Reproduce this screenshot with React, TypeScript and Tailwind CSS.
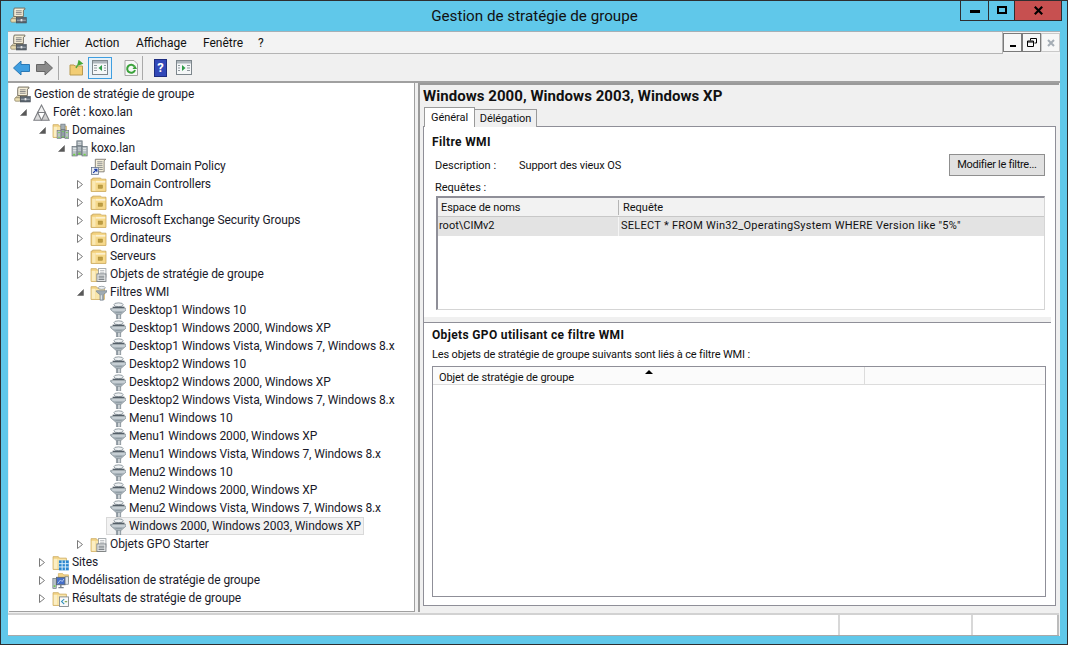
import React from "react";

const S = ({ children, size = 16, vb = 16 }: { children: React.ReactNode; size?: number; vb?: number }) => (
  <svg width={size} height={size} viewBox={`0 0 ${vb} ${vb}`} className="shrink-0 block">{children}</svg>
);

const Scroll = ({ size = 17 }: { size?: number }) => (
  <S size={size}>
    <path d="M4 1h10v1.2L12.6 3V9H3.5V3z" fill="#f6efd8" stroke="#6f6a5c" strokeWidth="0.9" />
    <path d="M5.5 3.6h5.5M5.5 5.2h5.5M5.5 6.8h5.5" stroke="#77777a" strokeWidth="0.8" />
    <path d="M1 11.5 3 9.3h9v1.4L6 11z" fill="#efe3bd" stroke="#8a8266" strokeWidth="0.6" />
    <rect x="0.7" y="11" width="5.3" height="3.3" rx="1" fill="#eadcb0" stroke="#8a8266" strokeWidth="0.7" />
    <rect x="6" y="10" width="9.3" height="5" fill="#5c6670" stroke="#3f4750" strokeWidth="0.6" />
    <rect x="6.5" y="12" width="8.4" height="0.9" fill="#aab2ba" />
    <rect x="10" y="11.3" width="1.6" height="2.2" fill="#e7e7e7" />
  </S>
);

const Forest = () => (
  <S size={17}>
    <path d="M8 1 11.6 8H4.4z" fill="#f2f2f2" stroke="#7c7e82" strokeWidth="1" />
    <path d="M4.4 8 8 15.3H0.8z" fill="#dcdcdc" stroke="#7c7e82" strokeWidth="1" />
    <path d="M11.6 8 15.2 15.3H8z" fill="#cfcfcf" stroke="#7c7e82" strokeWidth="1" />
  </S>
);

const Servers = () => (
  <S size={17}>
    <rect x="5.5" y="0.8" width="5" height="5" fill="#a4aeb4" stroke="#67727a" strokeWidth="0.7" />
    <rect x="1" y="6" width="4.8" height="9" fill="#b9c1c6" stroke="#67727a" strokeWidth="0.7" />
    <rect x="5.6" y="5.5" width="4.8" height="8.5" fill="#949fa6" stroke="#67727a" strokeWidth="0.7" />
    <rect x="10.4" y="6" width="4.8" height="9" fill="#b9c1c6" stroke="#67727a" strokeWidth="0.7" />
    <path d="M2 8h3M6.5 7.5h3M11.3 8h3M2 10h3M6.5 9.5h3M11.3 10h3M6.5 2.5h3M6.5 4h3" stroke="#eef1f3" strokeWidth="0.7" />
    <rect x="2" y="13" width="2" height="1.6" fill="#6fd04a" />
    <rect x="7" y="12" width="2" height="1.6" fill="#6fd04a" />
    <rect x="11.8" y="13" width="2" height="1.6" fill="#6fd04a" />
  </S>
);

const PaleFolder = ({ children }: { children?: React.ReactNode }) => (
  <S size={17}>
    <path d="M1 2.5h5l1 1.4h6.5V14.5H1z" fill="#f3d486" stroke="#cfae62" strokeWidth="0.8" />
    <path d="M1.6 4.5h3.4v9.5H1.6z" fill="#fbeec4" />
    <path d="M5 4.6h8v9.5H5z" fill="#f9e6aa" />
    {children}
  </S>
);

const DomainFolder = () => (
  <PaleFolder>
    <rect x="8.3" y="2" width="4" height="5" fill="#a4aeb4" stroke="#67727a" strokeWidth="0.6" />
    <rect x="4.8" y="8" width="3.8" height="7.4" fill="#b9c1c6" stroke="#67727a" strokeWidth="0.6" />
    <rect x="8.5" y="7" width="3.8" height="7.8" fill="#949fa6" stroke="#67727a" strokeWidth="0.6" />
    <rect x="12.2" y="8" width="3.6" height="7.4" fill="#b9c1c6" stroke="#67727a" strokeWidth="0.6" />
    <path d="M5.8 14.4h1.6M9.5 13.8h1.6M13.2 14.4h1.6M5.8 10h1.6M9.5 9h1.6M13.2 10h1.6" stroke="#6fd04a" strokeWidth="0.9" />
  </PaleFolder>
);

const OuFolder = () => (
  <S size={17}>
    <path d="M1 3h1.5V2h7.5l1 1H15v11.5H1z" fill="#f2cf7a" stroke="#c9a75a" strokeWidth="0.8" />
    <path d="M2 4.5h3.4v9.5H2z" fill="#fae9b4" />
    <path d="M5.4 3.5h9v10.5h-9z" fill="#f6d98c" />
    <path d="M5.4 5.5h9" stroke="#fdf4d8" strokeWidth="1.4" />
    <rect x="7.7" y="8.5" width="4" height="3" fill="#bf9d42" stroke="#a58935" strokeWidth="0.5" />
  </S>
);

const DocFolder = () => (
  <PaleFolder>
    <rect x="8" y="2.5" width="7" height="8" fill="#fff" stroke="#8a9095" strokeWidth="0.7" />
    <path d="M9.5 4.5h4M9.5 6.5h4" stroke="#8a9095" strokeWidth="0.7" />
    <rect x="6.5" y="7.5" width="8.5" height="7" fill="#eef0f1" stroke="#6f767c" strokeWidth="0.8" />
    <path d="M8 9.6h5.5M8 11.2h5.5M8 12.8h5.5" stroke="#6f767c" strokeWidth="0.9" />
  </PaleFolder>
);

const Funnel = () => (
  <S size={17}>
    <ellipse cx="9" cy="2.6" rx="4.4" ry="1.8" fill="#eef1f3" stroke="#76828a" strokeWidth="0.7" />
    <path d="M3.4 4.4h11.2v1.2H3.4z" fill="#4a555d" />
    <path d="M1.5 6h15v1.2L11 12H7L1.5 7.2z" fill="#aab5bc" stroke="#7c8890" strokeWidth="0.6" />
    <path d="M3 7.5h12" stroke="#e6ebee" strokeWidth="0.9" />
    <path d="M6 9.8h6" stroke="#8d99a1" strokeWidth="0.9" />
    <path d="M7 12h4v4H7z" fill="#8f9aa2" stroke="#7a868e" strokeWidth="0.5" />
    <path d="M9.4 12v3.8" stroke="#eef1f3" strokeWidth="1.2" />
  </S>
);

const FunnelFolder = () => (
  <PaleFolder>
    <ellipse cx="11" cy="3.6" rx="3.4" ry="1.4" fill="#eef1f3" stroke="#76828a" strokeWidth="0.6" />
    <path d="M6 6.3h10v1l-3.4 2.7v5.2h-3.2v-5.2L6 7.3z" fill="#9fabb3" stroke="#74808a" strokeWidth="0.6" />
    <path d="M10.6 10.5v4.2" stroke="#eef1f3" strokeWidth="1" />
  </PaleFolder>
);

const Policy = () => (
  <S size={17}>
    <path d="M5 1.2h9.8L13.3 2.6V13H5z" fill="#f5efda" stroke="#77736a" strokeWidth="0.8" />
    <path d="M6.8 3.6h5M6.8 5.4h5M6.8 7.2h5M8.6 9h3.4M8.6 10.8h3.4" stroke="#797d82" strokeWidth="0.8" />
    <rect x="1.3" y="9" width="6.7" height="6.5" fill="#e8ecf2" stroke="#5b6b86" strokeWidth="0.7" />
    <path d="M3 14 6.3 10.7M4 10.6h2.4V13" stroke="#1f3fa8" strokeWidth="1.2" fill="none" />
  </S>
);

const Sites = () => (
  <PaleFolder>
    <rect x="6.5" y="6" width="9.3" height="9.4" fill="#2a86cf" />
    <path d="M9.5 6v9.4M12.6 6v9.4M6.5 9.1h9.3M6.5 12.2h9.3" stroke="#dcf0fc" strokeWidth="0.9" />
  </PaleFolder>
);

const Modeling = () => (
  <S size={17}>
    <path d="M6 1.5h4l1 1.2h4.5V9H6z" fill="#f3d486" stroke="#c9a85c" strokeWidth="0.6" />
    <rect x="0.8" y="6" width="3.2" height="9.5" fill="#b9c1c6" stroke="#67727a" strokeWidth="0.6" />
    <rect x="1.6" y="12.5" width="1.6" height="1.6" fill="#6fd04a" />
    <rect x="4.3" y="5" width="8" height="7" fill="#456fc9" stroke="#5b6670" strokeWidth="0.8" />
    <path d="M5.4 10.8 8 7.5 9.5 9l1.7-2.4" stroke="#d7e6fb" strokeWidth="0.7" fill="none" />
    <path d="M8.3 12v2M6 14.7h5" stroke="#77818a" strokeWidth="1.3" />
    <rect x="12.3" y="4.5" width="3.2" height="7" fill="#e2e7eb" stroke="#67727a" strokeWidth="0.6" />
  </S>
);

const Results = () => (
  <PaleFolder>
    <rect x="7" y="6.5" width="8.5" height="9" fill="#fafafa" stroke="#7c8388" strokeWidth="0.8" />
    <path d="M11.5 8.5 9 10.8l2.5 2.4" stroke="#2f8fbd" strokeWidth="1" fill="none" />
    <path d="M12 11h2.3" stroke="#6f9c3f" strokeWidth="1" />
  </PaleFolder>
);

const Expanded = () => (
  <svg width="7" height="7" viewBox="0 0 7 7" className="block"><path d="M6.5 0.5V6.5H0.5z" fill="#595959" stroke="#595959" strokeWidth="0.5" /></svg>
);
const Collapsed = () => (
  <svg width="6" height="9" viewBox="0 0 6 9" className="block"><path d="M0.5 0.5 5.5 4.5 0.5 8.5z" fill="#fff" stroke="#7a7a7a" strokeWidth="1" /></svg>
);

type Row = { l: number; t: string; e?: "o" | "c"; i: React.ReactNode; sel?: boolean };
const F = <Funnel />;
const rows: Row[] = [
  { l: 0, t: "Gestion de stratégie de groupe", i: <Scroll /> },
  { l: 1, t: "Forêt : koxo.lan", e: "o", i: <Forest /> },
  { l: 2, t: "Domaines", e: "o", i: <DomainFolder /> },
  { l: 3, t: "koxo.lan", e: "o", i: <Servers /> },
  { l: 4, t: "Default Domain Policy", i: <Policy /> },
  { l: 4, t: "Domain Controllers", e: "c", i: <OuFolder /> },
  { l: 4, t: "KoXoAdm", e: "c", i: <OuFolder /> },
  { l: 4, t: "Microsoft Exchange Security Groups", e: "c", i: <OuFolder /> },
  { l: 4, t: "Ordinateurs", e: "c", i: <OuFolder /> },
  { l: 4, t: "Serveurs", e: "c", i: <OuFolder /> },
  { l: 4, t: "Objets de stratégie de groupe", e: "c", i: <DocFolder /> },
  { l: 4, t: "Filtres WMI", e: "o", i: <FunnelFolder /> },
  { l: 5, t: "Desktop1 Windows 10", i: F },
  { l: 5, t: "Desktop1 Windows 2000, Windows XP", i: F },
  { l: 5, t: "Desktop1 Windows Vista, Windows 7, Windows 8.x", i: F },
  { l: 5, t: "Desktop2 Windows 10", i: F },
  { l: 5, t: "Desktop2 Windows 2000, Windows XP", i: F },
  { l: 5, t: "Desktop2 Windows Vista, Windows 7, Windows 8.x", i: F },
  { l: 5, t: "Menu1 Windows 10", i: F },
  { l: 5, t: "Menu1 Windows 2000, Windows XP", i: F },
  { l: 5, t: "Menu1 Windows Vista, Windows 7, Windows 8.x", i: F },
  { l: 5, t: "Menu2 Windows 10", i: F },
  { l: 5, t: "Menu2 Windows 2000, Windows XP", i: F },
  { l: 5, t: "Menu2 Windows Vista, Windows 7, Windows 8.x", i: F },
  { l: 5, t: "Windows 2000, Windows 2003, Windows XP", i: F, sel: true },
  { l: 4, t: "Objets GPO Starter", e: "c", i: <DocFolder /> },
  { l: 2, t: "Sites", e: "c", i: <Sites /> },
  { l: 2, t: "Modélisation de stratégie de groupe", e: "c", i: <Modeling /> },
  { l: 2, t: "Résultats de stratégie de groupe", e: "c", i: <Results /> },
];

const TreeRow = ({ r }: { r: Row }) => (
  <div className="flex h-[18px] items-center" style={{ paddingLeft: r.l === 0 ? 5 : 5 + 19 * (r.l - 1) }}>
    {r.l > 0 && (
      <div className="w-[19px] flex justify-start pl-[6px] items-center shrink-0">
        {r.e === "o" ? <Expanded /> : r.e === "c" ? <Collapsed /> : null}
      </div>
    )}
    <div className={r.sel ? "flex items-center h-[18px] bg-[#f2f2f2] border border-[#d9d9d9] pl-[2px] pr-[2px] -ml-[3px]" : "flex items-center"}>
      <div className="w-[20px] shrink-0 flex items-center">{r.i}</div>
      <span className="whitespace-nowrap text-[#1a1a2a] text-[12px] leading-[18px] tracking-[-0.1px]">{r.t}</span>
    </div>
  </div>
);

const ToolSep = () => <div className="w-px h-[24px] bg-[#a9a9a9]" />;

const PaneIcon = ({ flip }: { flip?: boolean }) => (
  <svg width="16" height="15" viewBox="0 0 16 15" className="block">
    <rect x="0.5" y="0.5" width="15" height="14" fill="#f5f7f8" stroke="#7d868c" />
    <rect x="1" y="1" width="14" height="2.5" fill="#aeb6bc" />
    <path d={flip ? "M11 5.5h3M11 8h3M11 10.5h3M2 5.5h2M2 8h2M2 10.5h2" : "M2 5.5h3M2 8h3M2 10.5h3M12 5.5h2M12 8h2M12 10.5h2"} stroke="#8f989e" strokeWidth="1.2" />
    <path d={flip ? "M6 5 9.5 8 6 11z" : "M10 5 6.5 8 10 11z"} fill="#2f9c48" />
  </svg>
);

const Arrow = ({ dir, color, edge }: { dir: "l" | "r"; color: string; edge: string }) => (
  <svg width="17" height="16" viewBox="0 0 17 16" className="block">
    <path d={dir === "l" ? "M0.5 8 8 1V4.5H16.5V11.5H8V15z" : "M16.5 8 9 1V4.5H.5V11.5H9V15z"} fill={color} stroke={edge} />
  </svg>
);

const MdiBtn = ({ children, muted }: { children: React.ReactNode; muted?: boolean }) => (
  <div className={`w-[19px] h-[19px] flex items-center justify-center bg-[#f7f7f7] border ${muted ? "border-[#c9c9c9]" : "border-[#7a7a7a]"}`}>{children}</div>
);

export default function App() {
  return (
    <div className="w-[1068px] h-[645px] bg-[#60c8ea] border border-[#2e2e30] flex flex-col overflow-hidden [font-family:Roboto,sans-serif]">
      {/* title bar */}
      <div className="h-[30px] shrink-0 flex items-start relative">
        <div className="pl-[9px] pt-[6px]"><Scroll /></div>
        <div className="flex-1 text-center pt-[5px] text-[15.2px] leading-[20px] text-[#111] pl-[82px]">Gestion de stratégie de groupe</div>
        <div className="flex h-[21px] border border-t-0 border-[#2e2e30] mr-[5px] -mt-px">
          <div className="w-[28px] border-r border-[#2e2e30] flex items-center justify-center"><div className="w-[10px] h-[3px] bg-black mt-[3px]" /></div>
          <div className="w-[26px] flex items-center justify-center border-r border-[#2e2e30]"><div className="w-[10px] h-[8px] border-2 border-black" /></div>
          <div className="w-[46px] bg-[#c75050] flex items-center justify-center">
            <svg width="9" height="9" viewBox="0 0 9 9"><path d="M0.8 0.8 8.2 8.2M8.2 0.8 0.8 8.2" stroke="#000" strokeWidth="2.2" /></svg>
          </div>
        </div>
      </div>

      {/* client */}
      <div className="flex-1 mx-[7px] mb-[8px] flex flex-col bg-[#f0f0f0] min-h-0">
        {/* menu */}
        <div className="h-[23px] shrink-0 flex border-t border-[#a6b0b6] bg-white">
          <div className="flex-1 flex items-center bg-[#f3f3f3] border-b border-r border-[#b4b4b4]">
            <div className="pl-[2px] w-[26px]"><Scroll /></div>
            <div className="flex text-[12px] text-[#111] leading-[18px]">
              <span className="w-[51px]">Fichier</span><span className="w-[51px]">Action</span><span className="w-[67px]">Affichage</span><span className="w-[55px]">Fenêtre</span><span>?</span>
            </div>
          </div>
          <div className="flex w-[57px] pt-px shrink-0 bg-[#f3f3f3]">
            <MdiBtn><div className="w-[6px] h-[2px] bg-black mt-[6px]" /></MdiBtn>
            <MdiBtn>
              <svg width="10" height="9" viewBox="0 0 10 9"><path d="M3.5 2.5V.5H9.5V5H7.5M.5 3H6.5V8.5H.5zM.5 4H6.5" fill="none" stroke="#000" /></svg>
            </MdiBtn>
            <MdiBtn muted>
              <svg width="8" height="8" viewBox="0 0 8 8"><path d="M1 1 7 7M7 1 1 7" stroke="#a5adb5" strokeWidth="2" /></svg>
            </MdiBtn>
          </div>
        </div>
        {/* toolbar */}
        <div className="h-[29px] shrink-0 flex items-center pl-[5px] border-b-2 border-[#a0a0a0] bg-[#f0f0f0]">
          <Arrow dir="l" color="#3f9ee0" edge="#2a78b5" />
          <div className="w-[6px]" />
          <Arrow dir="r" color="#8a8a8a" edge="#666" />
          <div className="w-[5px]" />
          <ToolSep />
          <div className="w-[10px]" />
          <svg width="16" height="16" viewBox="0 0 16 16" className="block">
            <path d="M1 5h4l1 1h7.5v9H1z" fill="#f2cd74" stroke="#b99a4f" />
            <path d="M7 8 10 3M10 1 13 3.5 9 5z" stroke="#46a83a" fill="#46a83a" strokeWidth="1.4" />
          </svg>
          <div className="w-[3px]" />
          <div className="w-[24px] h-[22px] flex items-center justify-center border border-[#3f9ee0] bg-[#e6f1f9]"><PaneIcon /></div>
          <div className="w-[12px]" />
          <svg width="14" height="16" viewBox="0 0 14 16" className="block">
            <path d="M1 .5H10L13.5 4V15.5H1z" fill="#f7f7f7" stroke="#a5a5a5" />
            <path d="M10.5 6.5A4 4 0 1 0 11 10" fill="none" stroke="#3aa23a" strokeWidth="2" />
            <path d="M8.5 9H13L11 5.5z" fill="#3aa23a" />
          </svg>
          <div className="w-[4px]" />
          <ToolSep />
          <div className="w-[11px]" />
          <div className="w-[13px] h-[18px] bg-[#3148b8] border border-[#1d2c80] text-white text-[13px] leading-[16px] font-bold text-center">?</div>
          <div className="w-[9px]" />
          <PaneIcon flip />
        </div>

        {/* panes */}
        <div className="flex-1 flex min-h-0">
          <div className="w-[406px] ml-px shrink-0 bg-white border-r border-b border-[#a0a0a0] pt-[2px] overflow-hidden">
            {rows.map((r, i) => <TreeRow key={i} r={r} />)}
          </div>
          <div className="w-[3px] shrink-0" />
          <div className="flex-1 border-l-2 border-t-2 border-[#9a9a9a] mr-px flex flex-col pl-[3px] pr-[3px] pb-[6px] [font-family:'Liberation_Sans',Arial,sans-serif] text-[11px] text-[#111]">
            <div className="h-[22px] shrink-0 text-[15px] font-bold leading-[20px] pt-[1px] tracking-[0.05px] whitespace-nowrap">Windows 2000, Windows 2003, Windows XP</div>
            <div className="h-[20px] shrink-0 flex items-end pl-[1px] relative z-10">
              <div className="w-[51px] h-[20px] bg-white border border-b-0 border-[#9a9a9a] text-center leading-[19px] tracking-[-0.05px]">Général</div>
              <div className="w-[62px] h-[18px] bg-[#f0f0f0] border border-l-0 border-b-0 border-[#9a9a9a] text-center leading-[18px] tracking-[-0.1px]">Délégation</div>
            </div>
            <div className="flex-1 min-h-0 bg-white border border-[#8f8f98] flex flex-col -mt-px">
              <div className="h-[190px] shrink-0 flex flex-col pt-[8px] pr-[10px]">
                <div className="font-bold pl-[8px] h-[14px] leading-[14px] text-[12px] tracking-[0.35px]">Filtre WMI</div>
                <div className="flex items-center pl-[11px] h-[22px] mt-[5px]">
                  <div className="w-[84px] pt-[2px]">Description :</div>
                  <div className="flex-1 pt-[2px] tracking-[-0.1px]">Support des vieux OS</div>
                  <div className="w-[96px] h-[22px] bg-[#e1e1e1] border border-[#8f8f8f] text-center leading-[20px] tracking-[-0.3px]">Modifier le filtre...</div>
                </div>
                <div className="pl-[11px] mt-[4px] h-[16px] leading-[16px]">Requêtes :</div>
                <div className="ml-[12px] h-[114px] border-2 border-r border-b border-[#8f8f98] border-b-[#d5d5d5] border-r-[#d5d5d5] flex flex-col">
                  <div className="h-[19px] shrink-0 flex items-center bg-[#f2f2f2] border-b border-[#c8c8c8]">
                    <div className="w-[181px] pl-[3px] border-r border-[#b5b5b5] h-[15px] leading-[15px] tracking-[-0.1px]">Espace de noms</div>
                    <div className="pl-[4px] pt-[2px]">Requête</div>
                  </div>
                  <div className="h-[19px] shrink-0 flex items-center bg-[#e3e3e3]">
                    <div className="w-[181px] pl-[1px] border-r border-[#f5f5f5] h-[19px] leading-[17px]">root\CIMv2</div>
                    <div className="pl-[2px] tracking-[0.27px] whitespace-nowrap">SELECT * FROM Win32_OperatingSystem WHERE Version like "5%"</div>
                  </div>
                </div>
              </div>
              <div className="h-[6px] shrink-0 bg-[#f0f0f0] border-b border-[#8f8f98] mr-[4px]" />
              <div className="flex-1 min-h-0 flex flex-col pr-[9px] pb-[8px]">
                <div className="font-bold pl-[8px] mt-[5px] h-[14px] leading-[14px] text-[12px] tracking-[0.35px] whitespace-nowrap">Objets GPO utilisant ce filtre WMI</div>
                <div className="pl-[8px] mt-[6px] h-[14px] leading-[14px] tracking-[-0.15px] whitespace-nowrap">Les objets de stratégie de groupe suivants sont liés à ce filtre WMI :</div>
                <div className="ml-[8px] mt-[4px] flex-1 min-h-0 border border-[#8f8f98] relative">
                  <div className="h-[18px] flex items-center border-b border-[#dcdcdc] bg-[#fbfbfb] pl-[6px]">
                    <div className="w-[426px] h-[18px] leading-[22px] border-r border-[#dcdcdc] tracking-[-0.1px]">Objet de stratégie de groupe</div>
                  </div>
                  <svg width="8" height="4" viewBox="0 0 8 4" className="absolute left-[212px] top-[3px]"><path d="M0 4 4 0 8 4z" fill="#000" /></svg>
                </div>
              </div>
            </div>
          </div>
        </div>

        {/* status */}
        <div className="h-[23px] shrink-0 flex bg-white border-t-2 border-[#d2d2d2] border-b border-b-[#a9a9a9] mt-px mr-px">
          <div className="flex-1 border-r-2 border-[#d8d8d8]" />
          <div className="w-[133px] border-r-2 border-[#d8d8d8]" />
          <div className="w-[86px] border-r-2 border-[#bcbcbc]" />
        </div>
      </div>
    </div>
  );
}
